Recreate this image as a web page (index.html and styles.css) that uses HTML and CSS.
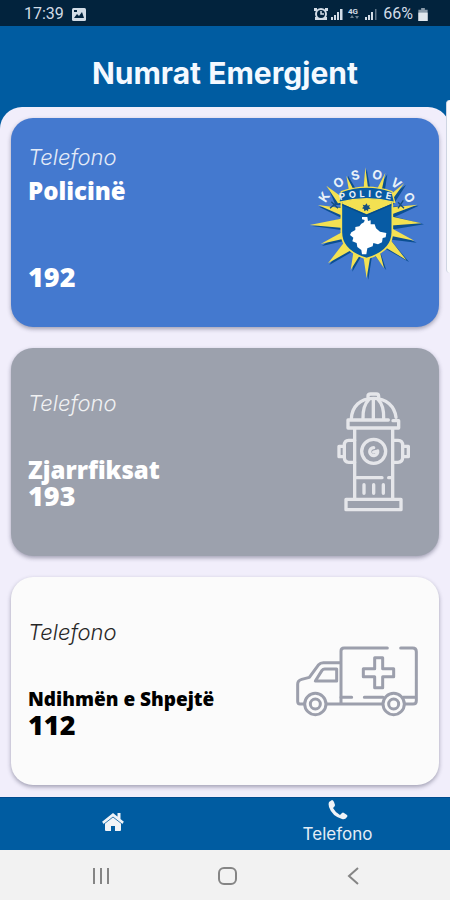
FILE: index.html
```html
<!DOCTYPE html>
<html lang="sq">
<head>
<meta charset="utf-8">
<meta name="viewport" content="width=device-width, initial-scale=1">
<title>Numrat Emergjent</title>
<link rel="stylesheet" href="styles.css">
</head>
<body>
<div class="app">
  <div class="status">
    <span class="status-group">
      <span>17:39</span>
      <svg class="status-image" viewBox="0 0 14 13" aria-hidden="true"><rect width="14" height="13" rx="1.500" fill="#d2dce6"/><path d="M2 10l3-4 2 2 3-4 2 6z" fill="#02233d"/><path d="M2 2h3v2H2z" fill="#02233d"/></svg>
    </span>
    <span class="status-group status-right">
      <svg class="status-signals" viewBox="0 0 64 16" aria-hidden="true">
        <g fill="#d2dce6">
          <path d="M0 2h3v3H0zM11 2h3v3h-3zM1 11h12v3H1z"/><circle cx="7" cy="8" r="6"/>
          <path d="M17 11h2v3h-2zM20 9h2v5h-2zM23 6h2v8h-2zM26 3h2.500v11H26z"/>
          <path d="M51 11h2v3h-2zM54 9h2v5h-2zM57 6h2v8h-2z"/><path d="M61 3h1.500v11H61z" opacity=".45"/>
          <path d="M36 12l2-3 2 3zM41 10h4l-2 3z" opacity=".5"/>
        </g>
        <circle cx="7" cy="8" r="4" fill="#02233d"/><path d="M7 5v3h3" fill="none" stroke="#d2dce6" stroke-width="1.500"/>
        <text class="network" x="34" y="8">4G</text>
      </svg>
      <span>66%</span>
      <svg class="status-battery" viewBox="0 0 10 14" aria-hidden="true"><path d="M3 0h4v2h3v12H0V2h3z" fill="#8a9bab"/><path d="M0 5h10v9H0z" fill="#e0e7ee"/></svg>
    </span>
  </div>

  <header class="header"><h1>Numrat Emergjent</h1></header>

  <main class="cards">
    <a class="card card-police" href="tel:192">
      <span class="card-text">
        <span class="label">Telefono</span>
        <strong class="name">Policinë</strong>
        <strong class="number">192</strong>
      </span>
      <svg class="badge" viewBox="30 30 348 348" role="img" aria-label="Kosovo Police">
        <g fill="#0b4f92">
          <path d="M190 130L206 42 222 130zM222 130L268 58 254 150zM250 140L324 90 272 170zM270 155L362 152 282 190zM270 180L378 208 270 226zM272 218L356 263 262 252zM262 236L333 321 242 270zM240 270L265 346 222 290zM194 290L211 374 224 290zM170 278L163 350 198 290zM145 252L94 330 180 280zM138 226L72 273 155 254zM136 190L42 213 136 226zM136 156L63 155 132 190zM112 150L90 96 150 150zM155 140L150 62 190 130z"/>
        </g>
        <g fill="#f3e152">
          <path d="M194 130L202 37 214 130zM224 128L262 53 244 140zM252 140L319 84 264 160zM270 158L358 149 276 180zM270 182L370 205 270 212zM274 216L349 257 266 240zM264 238L325 315 244 266zM240 268L258 340 224 290zM194 290L206 370 219 290zM168 280L158 345 192 290zM143 256L90 325 172 278zM138 228L68 267 150 248zM136 190L35 210 136 219zM136 160L60 150 128 180zM120 145L85 92 148 138zM158 136L145 62 180 130z"/>
        </g>
        <path d="M96 160l16-14m-12-6l20 20M318 160l-18-18m16-6l-16 24" stroke="#164f80" stroke-width="4" fill="none"/>
        <path d="M130 139Q206 116 283 139V232Q283 288 206 311Q130 288 130 232z" fill="#075ba4" stroke="#f3e152" stroke-width="5"/>
        <path d="M133 139Q206 120 280 139V147L206 178 133 147z" fill="#f3e152"/>
        <path d="M133 149L206 181 280 149" fill="none" stroke="#064b88" stroke-width="4"/>
        <path d="M122 142L130 110Q206 83 282 110L290 142Q206 120 122 142z" fill="#075ba4" stroke="#f3e152" stroke-width="4"/>
        <path d="M206 145l3 7 7-2-3 6 5 5-7 1-1 7-5-4-6 4-1-7-6-2 5-5-3-6 7 2z" fill="#164f80"/>
        <path d="M192 186H208L210 198 218 196V208H230L234 220 246 230 265 234 263 247 254 249 252 262 240 268 226 264 224 274 208 280 205 298H192L190 285 178 276 176 264 163 259 166 248 156 240 160 232 172 225 172 216 184 214 190 206 198 202 200 195 192 193z" fill="#fff"/>
        <path id="arc-top" d="M68 208A138 138 0 0 1 344 208" fill="none"/>
        <path id="arc-band" d="M112 140Q206 112 300 140" fill="none"/>
        <text class="arc-name"><textPath href="#arc-top"><tspan x="79 135 185 246 303 356">KOSOVO</tspan></textPath></text>
        <text class="arc-role"><textPath href="#arc-band"><tspan x="24 54 82 104 130 160">POLICE</tspan></textPath></text>
      </svg>
    </a>

    <a class="card card-fire" href="tel:193">
      <span class="card-text">
        <span class="label">Telefono</span>
        <span class="pair"><strong class="name">Zjarrfiksat</strong><strong class="number">193</strong></span>
      </span>
      <svg class="hydrant" viewBox="51 36 222 360" aria-hidden="true">
        <g fill="none" stroke="#e5e6ea" stroke-width="10" stroke-linecap="round" stroke-linejoin="round">
          <path d="M144 52V48Q144 42 152 42H169Q176 42 176 50V55M94 116C96 80 120 55 160 55S224 80 228 112"/>
          <path d="M129 116C128 88 137 68 147 58M160 58V116M191 116C192 88 184 68 174 58"/>
          <path d="M219 122H236V144H84V120H205M104 146V354M218 146V354M78 358H243V389H78z"/>
          <path d="M104 181H86Q73 181 73 196V232Q73 247 86 247H104M73 199H57V230H73M218 181H234Q248 181 248 196V232Q248 247 234 247H218M248 199H265V230H248"/>
          <circle cx="161" cy="214" r="36"/>
          <path d="M161 203A12 12 0 1 0 173 213L161 216M110 293H186M206 293H214M132 314V340M161 314V340M190 314V340"/>
        </g>
      </svg>
    </a>

    <a class="card card-medical" href="tel:112">
      <span class="card-text">
        <span class="label">Telefono</span>
        <span class="pair"><strong class="name name-long">Ndihmën e Shpejtë</strong><strong class="number">112</strong></span>
      </span>
      <svg class="ambulance" viewBox="45 46 372 216" aria-hidden="true">
        <g fill="none" stroke="#9c9fac" stroke-width="9" stroke-linecap="round" stroke-linejoin="round">
          <path d="M322 55H192Q183 55 183 64V220M362 55H398Q409 55 409 66V213Q409 223 399 223H375M306 223H139M74 223H60Q53 223 53 215V164Q53 152 65 149L88 143 116 105Q121 99 130 99H183"/>
          <path d="M170 118H134Q129 118 126 122L106 154H170zM183 203H215M253 203H309M370 203H405"/>
          <path d="M284 84H308V117H341V141H308V174H284V141H250V117H284z"/>
          <circle cx="106" cy="223" r="32"/><circle cx="106" cy="223" r="15"/>
          <circle cx="341" cy="223" r="32"/><circle cx="341" cy="223" r="15"/>
        </g>
      </svg>
    </a>
    <span class="edge-handle"></span>
  </main>

  <nav class="tabs" aria-label="Kryesore">
    <a class="tab" href="#home" aria-label="Ballina">
      <svg class="icon-home" viewBox="0 0 22 18" aria-hidden="true"><path d="M11 3L19 9V17Q19 18 18 18H13V13H9V18H4Q3 18 3 17V9z" fill="#f0f3f7"/><path d="M1 10L11 2 21 10M17 0V6" fill="none" stroke="#f0f3f7" stroke-width="3"/><path d="M2 11L11 4 20 11" fill="none" stroke="#005ca1" stroke-width=".8"/></svg>
    </a>
    <a class="tab" href="#telefono">
      <svg class="icon-phone" viewBox="0 0 20 20" aria-hidden="true"><path d="M1 2L4 0Q5 0 6 2L7 5Q7 6 6 7L5 8Q7 12 12 15L14 13Q15 12 16 13L19 15Q20 16 19 17Q17 20 14 19Q4 16 1 7Q0 4 1 2z" fill="#f0f3f7"/></svg>
      <span>Telefono</span>
    </a>
  </nav>

  <div class="system">
    <button type="button" aria-label="Recents"><svg viewBox="0 0 20 20"><path d="M3 2V18M10 2V18M17 2V18"/></svg></button>
    <button type="button" aria-label="Home"><svg viewBox="0 0 20 20"><rect x="2" y="2" width="17" height="16" rx="5"/></svg></button>
    <button type="button" aria-label="Back"><svg viewBox="0 0 20 20"><path d="M15 2L6 10 15 18"/></svg></button>
  </div>
</div>
</body>
</html>
```
FILE: styles.css
```css
* { box-sizing: border-box; }

body {
  margin: 0;
  font-family: Inter, "Liberation Sans", sans-serif;
  background: #005ca1;
}

.app {
  display: flex;
  flex-direction: column;
  min-height: 100vh;
}

svg { display: block; flex: none; }
a { color: inherit; text-decoration: none; }

.status {
  display: flex;
  justify-content: space-between;
  align-items: center;
  height: 26px;
  padding: 2px 22px 0 24px;
  background: #02233d;
  color: #d2dce6;
  font: 16px/24px Roboto, sans-serif;
}
.status-group { display: flex; align-items: center; gap: 8px; }
.status-right { gap: 5px; }
.status-image { width: 14px; height: 13px; }
.status-signals { width: 64px; height: 16px; }
.status-battery { width: 10px; height: 13px; }
.network { font: bold 8px Roboto, sans-serif; fill: #d2dce6; }

.header {
  display: flex;
  align-items: center;
  justify-content: center;
  height: 81px;
  padding-top: 12px;
  color: #f4f9ff;
}
.header h1 {
  margin: 0;
  font-size: 30px;
  line-height: 36px;
  font-weight: 700;
}

.cards {
  position: relative;
  flex: 1;
  display: flex;
  flex-direction: column;
  gap: 21px;
  padding: 11px 11px 12px;
  background: #f1eefb;
  border-radius: 22px 22px 0 0;
}
.edge-handle {
  position: absolute;
  top: -7px;
  right: 0;
  width: 4px;
  height: 173px;
  border-radius: 4px 0 0 4px;
  background: #fbfbfe;
  border-left: 1px solid #cfd5e2;
}

.card {
  flex: 1;
  display: flex;
  justify-content: space-between;
  min-height: 208px;
  padding: 0 15px 0 17px;
  border-radius: 22px;
  box-shadow: 0 2px 4px rgba(40, 40, 70, 0.4);
}
.card-police { background: #4479cf; color: #fff; }
.card-fire { background: #9ca1ad; color: #fff; }
.card-medical { background: #fbfbfb; color: #000; }

.card-text {
  display: flex;
  flex-direction: column;
  align-items: flex-start;
}
.card-police .card-text { padding-top: 26px; }
.card-fire .card-text,
.card-medical .card-text { padding-top: 42px; }

.label {
  font-size: 22px;
  line-height: 26px;
  font-style: italic;
  font-weight: 300;
  opacity: 0.85;
}
.name, .number {
  font-family: "Noto Sans", sans-serif;
  font-weight: 900;
  line-height: 26px;
}
.name { font-size: 24px; }
.name-long { font-size: 19px; }
.number { font-size: 27px; }
.card-police .name { margin-top: 8px; }
.card-police .number { margin-top: 60px; }
.pair {
  display: flex;
  flex-direction: column;
  margin-top: 41px;
}

.badge { width: 116px; height: 116px; margin-top: 47px; }
.hydrant { width: 74px; height: 120px; margin: 44px 13px 0 0; }
.ambulance { width: 124px; height: 72px; margin: 68px 5px 0 0; }
.arc-name, .arc-role {
  font-family: Inter, sans-serif;
  fill: #e9f1f8;
  text-anchor: middle;
}
.arc-name { font-size: 38px; font-weight: 700; }
.arc-role { font-size: 28px; font-weight: 700; }

.tabs {
  display: grid;
  grid-template-columns: 1fr 1fr;
  height: 53px;
  padding-bottom: 5px;
  background: #005ca1;
  color: #e3edf6;
  border-top: 1px solid #004b90;
}
.tab {
  display: flex;
  flex-direction: column;
  align-items: center;
  justify-content: center;
  gap: 4px;
  font-size: 17px;
  line-height: 20px;
}
.icon-home { width: 22px; height: 18px; }
.icon-phone { width: 20px; height: 20px; }

.system {
  display: flex;
  justify-content: space-between;
  align-items: center;
  height: 50px;
  padding: 2px 82px 0 86px;
  background: #f2f2f2;
}
.system button {
  padding: 5px;
  border: 0;
  background: none;
}
.system svg {
  width: 20px;
  height: 20px;
  fill: none;
  stroke: #858585;
  stroke-width: 2;
}
```
